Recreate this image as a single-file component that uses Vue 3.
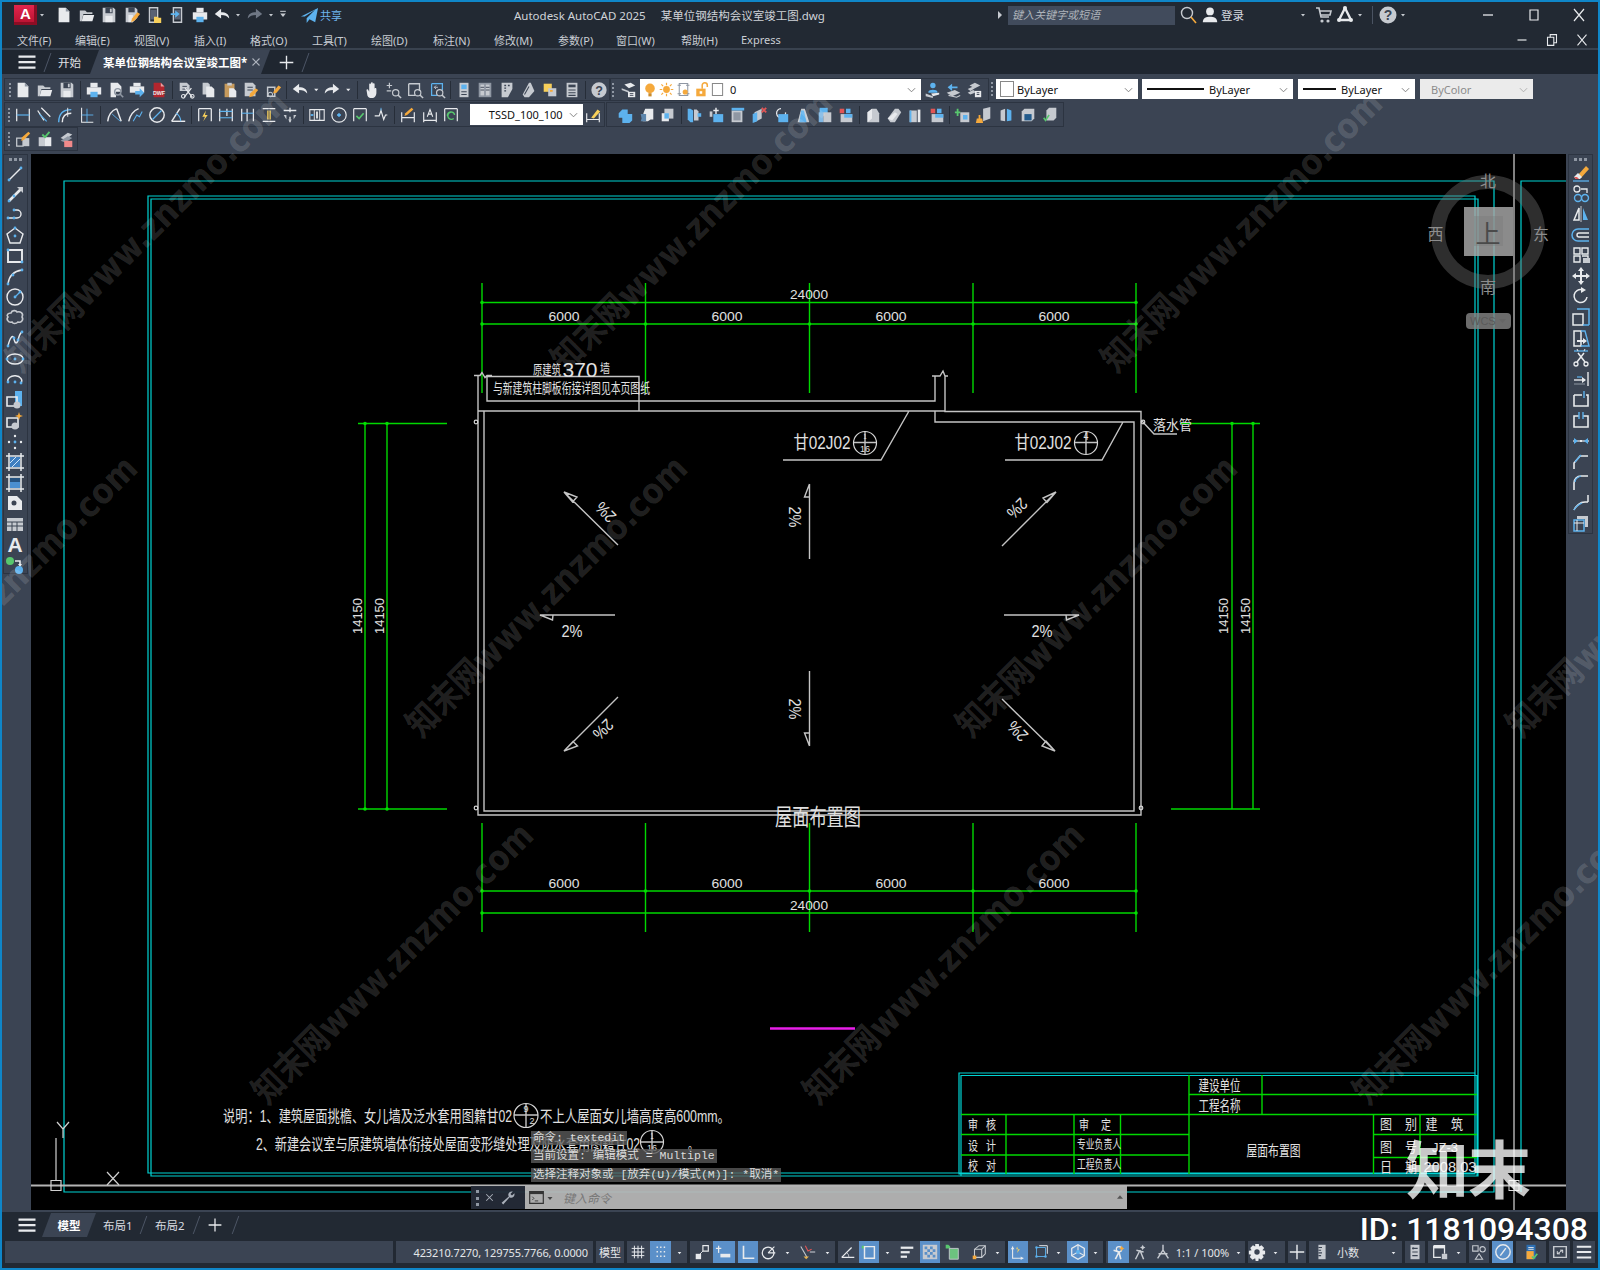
<script setup>
import { h } from 'vue'

const W = '#e8eaed', L = '#c6cad0', M = '#8f97a3', B = '#5db2ee', O = '#f5a93c', Y = '#f7cf5a', Rd = '#e25555', Gn = '#58c76e', D = '#3b4453'
const S = (d, c = W, w = 1.4) => ({ d, fill: 'none', stroke: c, 'stroke-width': w })
const F = (d, c = W) => ({ d, fill: c })
const C = (x, y, r) => `M${x - r} ${y}a${r} ${r} 0 1 0 ${2 * r} 0a${r} ${r} 0 1 0 ${-2 * r} 0z`
const dot = (...p) => { const o = []; for (let i = 0; i < p.length; i += 2) o.push(F(C(p[i], p[i + 1], 1.4), B)); return o }
const T = (t, x, y, size, c = W) => ({ t, x, y, 'font-size': size, fill: c, 'font-family': 'Liberation Sans, sans-serif', 'font-weight': 700, 'text-anchor': 'middle' })
const glass = [S(C(13, 13, 3.5), L, 1.3), S('M15.5 15.5L19 19', L, 1.6)]

const icons = {
  new: [F('M4 2h8l4 4v12H4z'), F('M12 2l4 4h-4z', M)],
  open: [F('M2 5h6l2 2h6v2H6L4 17H2z', L), F('M6 10h12l-2 7H4z')],
  save: [F('M3 2h12l2 2v14H3z', L), F('M6 2h8v6H6z', D), F('M11 3h2v4h-2z', L), F('M6 11h8v7H6z')],
  saveas: [F('M3 2h11l2 2v9l-5 5H3z', L), F('M6 2h7v5H6z', D), F('M6 10h5v8H6z'), F('M9 18l1-4 6-7 3 2-6 7z', O)],
  phone: [S('M5 2h9v16H5z', L, 1.6), F('M6 4h7v11H6z', '#596274'), F('M10 12h4l1 1h3v6h-8z', Y)],
  phoneup: [S('M6 2h9v16H6z', L, 1.6), F('M7 4h7v11H7z', '#596274'), F('M3 8h5V5l5 4-5 4v-3H3z', B)],
  print: [F('M6 2h8v5H6z'), F('M2 7h16v8H2z'), F('M6 12h8v6H6z', B)],
  undo: [F('M2 9l7-6v4c5 0 9 2 9 7-2-3-5-4-9-4v4z')],
  redo: [F('M18 9l-7-6v4c-5 0-9 2-9 7 2-3 5-4 9-4v4z', W)],
  redodim: [F('M18 9l-7-6v4c-5 0-9 2-9 7 2-3 5-4 9-4v4z', '#6f7785')],
  drop: [F('M6 8h8l-4 5z', L)],
  dropd: [F('M6 9h8l-4 5z', W)],
  menu: [F('M6 4h8v1.500H6z', L), F('M6 8h8l-4 5z', L)],
  share: [F('M1 11L19 2l-3 15-6-3-3 4v-5l9-9-11 7z', B)],
  search: [S(C(9, 8, 5.5), L, 1.4), S('M13 12l5 6', O, 1.6)],
  user: [F(C(10, 6, 4.3)), F('M2 18c0-5 4-6 8-6s8 1 8 6z')],
  cart: [S('M3 3h3l2 9h8M7 6h11l-1 4H8', L, 1.6), F(C(9, 16, 1.6), L), F(C(15, 16, 1.6), L)],
  aicon: [S('M10 3L4 15M10 3l6 12M4 15h12', W, 2.4), F(C(10, 3, 2)), F(C(4, 15, 2)), F(C(16, 15, 2))],
  help: [F(C(10, 10, 8.5), L), T('?', 10, 15, 14, D)],
  min: [S('M5 10h10', W, 1.3)],
  max: [S('M6 5h8v10H6z', W, 1.2)],
  close: [S('M5 4l10 12M15 4L5 16', W, 1.2)],
  restore: [S('M5 7h7v9H5z', W, 1.2), S('M8 7V4h7v9h-3', W, 1.2)],

  preview: [F('M4 2h8l4 4v6h-6v6H4z'), S(C(12, 12, 3.5), M, 1.6), S('M14.5 14.5L18 18', M, 1.8)],
  plot: [F('M6 2h8v4H6z'), F('M2 6h16v7H2z'), F('M8 11h5V8l5 5-5 5v-3H8z', B)],
  dwf: [F('M4 2h8l4 4v12H4z', '#b3262e'), F('M12 2l4 4h-4z', '#e8a0a0'), T('DWF', 10, 15, 6, W)],
  cut: [F('M3 2h8l3 3v6H3z', L), S('M6 6h5M6 9h5', D, 1), S('M9 8l8 10M16 8L8 18', W, 1.4), S(C(7, 17, 2), W, 1.2), S(C(17, 17, 2), W, 1.2)],
  copy: [F('M4 2h6l2 2v11H4z', L), F('M8 6h6l3 3v9H8z')],
  paste: [F('M4 3h11v15H4z', '#c69a5c'), F('M7 2h5v3H7z', L), F('M9 8h5l3 3v7H9z')],
  match: [F('M3 2h9l3 3v12H3z', L), S('M6 7h6M6 10h6', D, 1.2), F('M8 18l1-4 6-6 3 2-6 7z', O)],
  brush: [S('M4 7h8v10H4z', L, 1.6), F('M10 14l1-3 5-6 3 2-5 6z', O), S(C(7, 15, 2.5), L, 1.2)],
  pan: [F('M5 10c0-1 2-1 2 0l1 2V4c0-1.500 2-1.500 2 0v4V2.500c0-1.500 2-1.500 2 0V8V3.500c0-1.500 2-1.500 2 0V9c0-1.500 2-1.500 2 0v4c0 3-2 6-5 6s-4-1-5-3z')],
  zoomrt: [S('M6 2v6M3 5h6M3 11h5', L, 1.3), ...glass],
  zoomwin: [S('M3 3h12v8', L, 1.5), S('M3 3v13h7', L, 1.5), ...glass],
  zoomprev: [S('M4 3h12v7M4 3v13h6', B, 1.4), S('M11 7H7l2-2M7 7l2 2', L, 1), ...glass],
  props: [F('M5 2h10v16H5z', L), F('M7 4h6v5H7z', B), S('M7 12h6M7 15h6', D, 1.2)],
  design: [F('M3 2h14v16H3z', M), F('M5 4h4v12H5z', L), F('M11 4h4v12h-4z', L), S('M5 7h4M5 10h4M11 7h4M11 10h4', D, 1)],
  tool: [F('M4 2h12v7l-5 9H4z', L), S('M7 5h2M11 5h2M7 8h2M7 11h2', D, 1.4)],
  sheet: [F('M3 15L10 2h2l4 9-6 7H5z', L), S('M5 15l5-9', D, 1.2)],
  markup: [F('M3 3h9v9H3z', Y), F('M8 8h9v9H8z', L), F('M10 10h3v2h-3z', O)],
  calc: [F('M4 2h12v16H4z', L), F('M6 4h8v3H6z', D), S('M6 10h8M6 13h8M6 16h8', D, 1.2)],
  layer: [F('M6 4l7-2 5 3-7 3z'), F('M3 8l8 3v2l-8-3z', L), F('M10 12h8v6h-8z'), S('M12 14h4M12 16h4', D, 1)],
  bulb: [F(C(10, 8, 6), O), F('M8 14h4v4H8z', '#c98a2c')],
  sun: [F(C(10, 10, 4), O), S('M10 2v3M10 15v3M2 10h3M15 10h3M4 4l2 2M14 14l2 2M4 16l2-2M14 6l2-2', O, 1.4)],
  freeze: [S('M5 3h10v14H5z', M, 1.2), S('M3 5h4M13 5h4M3 15h4M13 15h4', M, 1.2), F(C(12, 13, 3), O)],
  lock: [F('M5 9h11v9H5z', O), S('M12 9V5a3 3 0 0 1 6 0v2', O, 1.8), F('M9 12h3v3H9z', '#fff')],
  lsquare: [S('M4 3h12v14H4z', '#888', 1.2)],
  lmatch: [F(C(11, 5, 3), B), F('M6 12c0-3 10-3 10 0v1H6z', B), F('M3 14l8 3v2l-8-2z', L), F('M9 14l9-1v2l-7 2z')],
  lprev: [F('M9 3L4 7l5 4V8h6V6H9z', B), F('M3 13l9-3 6 3-9 4z', L), S('M5 16l9 2 4-2', L, 1.2)],
  liso: [F('M5 5l6-3 6 3-6 3z', L), F('M3 9l6-3 2 2-5 3z', L), F('M3 13l6-3 2 1v2l-5 2z', L), F('M11 11h7v7h-7z'), S('M13 13h3M13 15h3', D, 1)],

  dlin: [S('M3 3v14M17 3v14', W), S('M3 10h14', B, 1.3)],
  dali: [S('M3 5l7 11M7 2l10 10', W), S('M5 9l8 8', B, 1.3)],
  darc: [S('M3 18C3 9 8 4 17 4', B, 1.6), S('M7 18C7 12 10 8 17 8', W, 1.6), S('M13 2v10', W, 1)],
  dord: [S('M4 2v16h13', W, 1.2), S('M10 3v15M4 10h13', B, 1)],
  drad: [S('M3 17C4 9 8 5 13 3', W, 1.6), S('M13 3l5 14', W, 1.6), S('M8 9l9 8', B, 1)],
  djog: [S('M3 17C5 9 9 5 14 3', W, 1.6), S('M8 17l4-7 3 2 3-6', B, 1.2)],
  ddia: [S(C(10, 10, 8), W, 1.6), S('M5 15L15 5', B, 1.4)],
  dang: [S('M3 17h15', W, 1.6), S('M3 17L12 3', W, 1.6), S('M8 8c3 2 5 5 5 9', B, 1.2)],
  dqk: [S('M3 3h14M3 3v14M17 3v14', W, 1.4), F('M11 5l-4 7h3l-2 5 5-7h-3z', Y)],
  dbase: [S('M3 3v14M11 3v8M17 3v14', W, 1.4), S('M3 6h14M3 13h14', B, 1.2)],
  dcont: [S('M3 3v14M9 3v14M16 3v14', W, 1.4), S('M3 8h13', B, 1.2)],
  dsp: [S('M3 3h14M3 17h14', W, 1.4), F('M8 5h4v10H8z', Y), S('M10 3v14', D, 1)],
  dbrk: [S('M3 5h14M10 2v5M10 12v6', W, 1.4), F('M3 10h3v5zM17 10h-3v5z', L), F('M8 15h4l-2 3z', L)],
  tol: [S('M2 4h16v12H2z', W, 1.2), S('M7 4v12M13 4v12', W, 1), F('M9 6h2v8H9z', W), F('M3 9h3v2H3z', B)],
  center: [S(C(10, 10, 8), W, 1.3), F('M9 8h2v4H9zM8 9h4v2H8z', B)],
  insp: [S('M3 3h14M3 3v14M17 3v14', W, 1.3), S('M6 11l3 3 5-6', Gn, 1.8)],
  jog: [S('M3 11h5l2-6 3 10 2-5h2', W, 1.3), S('M10 2v3', B, 1)],
  dedit: [S('M3 7v11M17 7v11M3 13h14', W, 1.3), F('M6 11l1-3 7-6 2 2-7 6z', O)],
  dtedit: [S('M3 7v11M17 7v11M3 16h14', W, 1.3), S('M7 12l3-8 3 8M8 9h4', W, 1.2)],
  dupd: [S('M3 3h14M3 3v14M17 3v14', W, 1.3), S('M14 9a4 4 0 1 0-1 5M6 11a4 4 0 0 1 8-1', Gn, 1.5)],
  dstyle: [S('M3 8v10M17 8v10M3 15h14', W, 1.3), F('M8 13l7-9 3 2-7 8z', Y)],
  union: [F('M3 8l4-4h6v5h5v7l-3 3H7V13H3z', B)],
  subtract: [F('M8 3h9v12h-3l-3 2H5l3-3v-3H6V8z', W), F('M3 9h6v8H3l1-3z', '#5d86ad')],
  inter: [F('M6 3h10v11H6z', L), F('M3 8h8v9H3z', W), F('M6 8h5v6H6z', B)],
  xface: [F('M3 3h3l3 2v13H6L3 15z', B), F('M10 4h3l2 2v10h-5z', L), F('M14 8h4v4h-4z', B)],
  mface: [S('M10 2v7M7 5h6', W, 1.6), F('M7 9h11v9H7z', B), F('M3 6h3v6H3z', L)],
  oface: [F('M4 5h12v13H4z', L), F('M6 7h8v9H6z', M), F('M4 2h14v3H4z', B)],
  delface: [F('M5 7l8-4v11l-8 4z', L), F('M3 9l5-2v10l-5 2z', B), S('M13 2l5 5M18 2l-5 5', Rd, 2)],
  rface: [S('M10 3a5 5 0 1 0 5 4', W, 1.4), F('M7 9h11v9H7z', B)],
  tface: [F('M4 18L8 3h4l5 15z', L), F('M8 5h3l3 13H6z', B)],
  cface: [F('M4 2h9v9H4z', B), F('M8 7h9v11H8z', L), F('M3 7h5v11H3z', '#7fb7e4')],
  clface: [F('M3 3h5v5H3z', Rd), F('M10 3h5v5h-5z', B), F('M4 9h13v9H4z', L), F('M8 9h9v4H8z', B)],
  body: [F('M5 18V7l5-4h5l3 5v10z', L), F('M5 7l5-4v11l-5 4z', W)],
  slice: [F('M3 14L11 3h4l3 4-7 11H6z', L), F('M3 14l8-7 3 2-6 7z', W)],
  cyl: [F('M4 5h8v13H4z', L), F('M4 5h2v13H4z', B), F('M13 4h3v14h-3z', W)],
  imp: [F('M3 3v3H1v2h2v3h2V8h2V6H5V3z', Gn), F('M7 7h10v11H7z', L), F('M10 10h5v5h-5z', B)],
  clean: [F('M9 3l8-2v13l-8 3z', L), F('M4 10h2v5H4z', O), F('M2 14h6l1 5H1z', O)],
  sep: [F('M4 5l5-2v14l-5-1z', L), F('M11 3l5 2v11l-5 1z', B)],
  shell: [F('M3 6l3-3h11v11l-3 3H3z', L), F('M6 9h8v7H6z', '#235b8c')],
  chk: [F('M6 5l3-3h8v11l-3 3H6z', L), S('M3 13l2 3 4-6', Gn, 1.8)],
  note1: [S('M3 9h7v9H3z', L, 1.4), F('M10 9h7v9h-7z', L), F('M8 12l1-4 7-6 2 2-7 7z', O)],
  note2: [F('M3 8h7v10H3z', L), F('M10 8h7v10h-7z', W), S('M7 5l3 3 5-6', Gn, 2)],
  note3: [F('M4 9l8-6 5 2-8 6z', L), F('M4 12l8-5 5 2-8 5z', M), F('M8 12h9v7H8z', '#f0898a')],

  line: [S('M4 16L16 4'), ...dot(4, 16, 16, 4)],
  pline: [S('M4 16L16 4', W, 2.6), F('M12 2h6v6z', L), ...dot(4, 16, 9, 11)],
  pl2: [S('M3 13h9a4 4 0 0 0 0-8H9'), ...dot(3, 13, 9, 5, 9, 13)],
  polyg: [S('M10 2l8 6-3 9H5L2 8z'), ...dot(10, 10, 10, 2)],
  rect: [S('M3 4h14v12H3z', W, 1.9), ...dot(3, 4, 17, 16)],
  arc: [S('M3 17C4 9 9 4 17 3'), ...dot(3, 17, 8, 8, 17, 3)],
  circ: [S(C(10, 10, 8)), S('M10 10l5-5', B, 1.2), ...dot(10, 10, 15, 5)],
  cloud: [S('M6 5c1-3 5-3 6-1 3-1 7 1 5 5 2 3-1 6-4 5-2 2-5 2-6 0-4 1-6-3-4-5-2-2 0-4 3-4z', L, 1.6)],
  spl: [S('M3 17C5 8 8 5 9 10s3 5 4 1 2-7 4-8'), ...dot(3, 17, 9, 9, 13, 11, 17, 3)],
  ell: [S('M2 10a8 5 0 1 0 16 0a8 5 0 1 0-16 0z'), ...dot(2, 10, 18, 10, 10, 10)],
  ella: [S('M3 12a7 5 0 1 1 13 1'), ...dot(3, 12, 10, 12, 16, 13)],
  ins: [F('M10 1h7v15h-7z', B), S('M2 7h10v9H2z', W, 1.6), F(C(12, 15, 3.5), L)],
  blk: [S('M2 7h11v9H2z', W, 1.6), F(C(10, 15, 3.5), L), F('M14 1l1 3 3 1-3 1-1 3-1-3-3-1 3-1z', O)],
  pts: [F(C(10, 4, 1.2)), F(C(4, 10, 1.2)), F(C(16, 10, 1.2)), F(C(10, 16, 1.2)), ...dot(10, 10)],
  hatch: [F('M5 5h10v10H5z', '#3f7fc0'), S('M7 15l8-8M5 11l6-6', '#cfe5fa', 1), S('M4 1v18M16 1v18M1 4h18M1 16h18', W, 1.5)],
  grad: [F('M5 5h10v10H5z', '#4a8fd0'), F('M5 5h10v4H5z', '#25527f'), S('M4 1v18M16 1v18M1 4h18M1 16h18', W, 1.5)],
  reg: [F('M3 3h9l5 5v9H3z'), F(C(9, 10, 2.5), D)],
  tbl: [F('M2 4h16v13H2z', L), S('M2 8h16M2 12h16M7 8v9M12 8v9', D, 1)],
  text: [T('A', 10, 18, 21, W)],
  addsel: [F(C(5, 6, 4), Gn), S('M10 6h5v4', W, 1.6), F('M13 9h4l-2 3z'), F(C(14, 15, 4), B)],

  erase: [F('M7 12l8-9 3 3-8 9z', O), F('M3 14l4-4 4 4-2 2H5z'), S('M2 18h16', B, 1.3), F('M3 14h3l2 2H5z', Rd)],
  copyo: [S(C(6, 5, 3), W, 1.3), S('M10 5h6v4', W, 1.3), S(C(7, 14, 3.5), B, 1.4), S(C(14, 14, 3.5), B, 1.4)],
  mirror: [S('M8 4L3 16h5z', W, 1.5), F('M12 4l5 12h-5z', B), S('M10 2v16', W, .8)],
  offset: [S('M18 4H7a6 6 0 0 0 0 12h11', B, 1.5), S('M18 8H8a2 2 0 0 0 0 4h10', W, 1.4)],
  array: [S('M3 3h6v6H3zM11 3h6v6h-6zM3 11h6v6H3zM11 11h6v4', W, 1.4), F('M12 13h7v5h-7z', L)],
  move: [F('M10 1l3 4h-2v4h4V7l4 3-4 3v-2h-4v4h2l-3 4-3-4h2v-4H5v2l-4-3 4-3v2h4V5H7z')],
  rot: [S('M16 11a6.500 6.500 0 1 1-5-7.300', W, 1.5), F('M10 1l5 3-5 3z')],
  scale: [S('M2 7h10v11H2z', W, 1.5), S('M6 2h12v16', B, 1.5), S('M12 18h6', B, 1.5)],
  str: [S('M3 3h7v15H3z', W, 1.5), S('M10 3h4l4 15h-8', B, 1.4), F('M6 12h6v-2l4 3-4 3v-2H6z')],
  trim: [S('M3 3h14', B, 1.3), S('M7 3L6 1M13 3l1-2', W, 1), S('M7 5l7 9M13 5l-7 9', W, 1.5), S(C(5, 16, 2), W, 1.3), S(C(15, 16, 2), W, 1.3)],
  ext: [S('M17 3v14', W, 1.4), S('M3 11h11', W, 1.4), F('M11 8l4 3-4 3z'), S('M6 8h5', B, 1.2), S('M3 15h11', M, 1)],
  brkp: [S('M3 6h8M15 6h2v11H3V6', W, 1.6), S('M13 2v7', B, 1.4)],
  brk: [S('M8 6H3v11h14V6h-5', W, 1.6), S('M8 2v7M12 2v7', B, 1.4)],
  join: [S('M2 10h16', W, 1.2), F('M3 7l4 3-4 3zM17 7l-4 3 4 3z', B), F('M9 9h2v2H9z')],
  cham: [S('M3 18v-6l6-7h8', W, 1.6), S('M4 11l6-7', B, 1.3)],
  fill: [S('M3 18V11c0-4 3-7 7-7h7', W, 1.6), S('M4 10c0-3 3-5 6-6', B, 1.3)],
  blend: [S('M3 18c1-3 3-4 5-6 3-3 6-2 9-2M17 3v7', W, 1.5), S('M3 18c2-4 6-6 8-7', B, 1.3)],
  expl: [F('M6 3h11v11h-3V6H6z', L), S('M3 7h10v11H3z', B, 1.5), S('M6 7v11M3 10h10', W, 1)],

  grid: [S('M6 3v14M10 3v14M14 3v14M3 6h14M3 10h14M3 14h14', W, 1.1)],
  snap: [F('M5 4h1.600v1.600H5zM9 4h1.600v1.600H9zM13 4h1.600v1.600H13zM5 9h1.600v1.600H5zM9 9h1.600v1.600H9zM13 9h1.600v1.600H13zM5 14h1.600v1.600H5zM9 14h1.600v1.600H9zM13 14h1.600v1.600H13z')],
  infer: [F('M3 12h6v6H3z'), S('M11 3h6v6h-6z', W, 1.3), S('M11 9L7 13', W, 1)],
  dyn: [S('M4 3v8', W, 1.4), S('M1 6h6', W, 1.4), F('M6 12h11v4H6z')],
  ortho: [S('M5 3v14h12', W, 1.8)],
  polar: [S(C(9, 11, 6.5), W, 1.4), S('M9 11l7-7M9 11h8', W, 1.2)],
  osnap: [S('M2 4l7 12', L, 1.2), S('M12 10h6', L, 1.2), S('M7 3l3 6 4-2', Rd, 1.2), F('M5 15h6l-3 3z', '#e5b04c')],
  angl: [S('M3 16h14M3 16L14 5', W, 1.4), S('M9 11a6 6 0 0 1 2 5', L, 1)],
  trk: [F('M2 3h3v3H2z', Gn), S('M5 4h11v13H5z', W, 1.6)],
  lwt: [F('M3 4h14v2.500H3z'), F('M3 9h10v2.500H3z'), F('M3 14h7v2.500H3z')],
  trans: [F('M2 2h16v16H2z', L), F('M4 4h3v3H4zM10 4h3v3h-3zM7 7h3v3H7zM13 7h3v3h-3zM4 10h3v3H4zM10 10h3v3h-3zM7 13h3v3H7zM13 13h3v3h-3z', '#5a8fc7')],
  selc: [F('M3 2h3l2 2v2H3z', Gn), F('M7 6h10v12H7z', '#6cc27f'), S('M7 6h10v12H7z', L, 1)],
  sub3: [S('M5 7l5-4h7v9l-4 4H5z', L, 1.2), S('M5 7h8v9M13 7l4-4', L, 1.2), F('M3 14h4v4H3z', O)],
  gizmo: [S('M4 4v13h12', W, 1.2), F('M4 4l-2 3h4z', W), F('M16 17l-3-2v4z', W), F('M9 4l1 3h2l-3 4 1-4H8z', Y)],
  sel3: [S('M5 5h10v10H5z', B, 1), S('M8 3h9v9', W, 1.1), ...dot(5, 5, 15, 15, 5, 15)],
  wbal: [S('M10 2l7 4v8l-7 4-7-4V6z', W, 1.4), S('M10 10V2M10 10l7 4M10 10l-7 4', W, 1.2), F(C(10, 10, 2.2), B)],
  anno: [S('M10 10L6 18M10 10l-6-2M10 10l2 8', W, 1.8), S(C(10, 7, 3), W, 1.4), F('M13 3l1 2 2 1-2 1-1 2-1-2-2-1 2-1z', O)],
  anno2: [S('M10 8L5 18M10 8l4 10M6 8l8 2', L, 1.6), F('M13 2l1 2 2 1-2 1-1 2-1-2-2-1 2-1z', L)],
  anno3: [S('M10 8L4 17M10 8l6 9M10 2v6M5 12h10', L, 1.6)],
  gear: [F('M8 1h4l.5 3 2.500-1.500 3 3L16 8l3 .5v4l-3 .5 1.500 2.500-3 3L12 17l-.5 3h-3L8 17l-3 1.500-3-3L3.500 13 1 12.500v-4L4 8 2.500 5.500l3-3L8 4z'), F(C(10, 10, 3), D)],
  plus: [S('M10 2v16M2 10h16', W, 1.6)],
  ruler: [F('M6 2h8v16H6z', L), S('M6 5h4M6 8h3M6 11h4M6 14h3', D, 1.2)],
  qprop: [F('M5 2h10v16H5z', L), S('M7 6h6M7 10h6M7 14h6', D, 1.2), F('M7 5h2v2H7z', D)],
  lay: [S('M3 3h12v9', W, 1.4), S('M3 3v13h8', W, 1.4), F('M3 3h12v3H3z'), F('M12 12h6v6h-6z', L)],
  iso: [S('M3 3h6v6H3z', L, 1.2), S(C(14, 7, 3), L, 1.2), S('M10 12l-4 6h8z', L, 1.2)],
  hw: [S(C(10, 10, 8), W, 1.6), S('M7 14l6-8', W, 1.6), F('M12 6l2-1-1 2z')],
  clip: [F('M5 2h10v16H5z', '#2d6fb3'), F('M5 9h8v9H5z', O), S('M7 5h6M7 7h6', W, 1), S('M11 15l2 2 4-5', Gn, 1.8)],
  full: [S('M3 4h14v12H3z', L, 1.6), S('M7 12l6-4M7 12v-3M7 12h3M13 8v3M13 8h-3', W, 1)],
  ham: [F('M1.500 3.500h17v2.200h-17zM1.500 9h17v2.200h-17zM1.500 14.500h17v2.200h-17z')],
  ham2: [F('M2 3h16v2.200H2zM2 9h16v2.200H2zM2 15h16v2.200H2z')],
  cmd: [S('M2 3h16v14H2z', '#333', 1.4), F('M2 3h16v3H2z', '#333'), S('M5 9l2 2-2 2M8 14h4', '#333', 1)],
  cmdv: [F('M5 8h10l-5 6z', '#444')],
  wrench: [F('M16 2l-3 3 2 2 3-3c1 4-3 7-6 5l-8 9-2-2 9-8c-2-3 1-7 5-6z', '#aab0ba')],
  xx: [S('M5 5l10 10M15 5L5 15', '#aab0ba', 1.6)],
  up: [F('M5 13l5-6 5 6z', '#555')],
}

const Ic = (p) => h('svg', { class: 'ic', viewBox: '0 0 20 20', width: p.s || 20, height: p.s || 20 },
  (icons[p.n] || []).map(o => o.t ? h('text', (({ t, ...r }) => r)(o), o.t) : h('path', o)))
Ic.props = ['n', 's']

const menus = [['文件(F)', 58], ['编辑(E)', 59], ['视图(V)', 60], ['插入(I)', 56], ['格式(O)', 62], ['工具(T)', 59], ['绘图(D)', 62], ['标注(N)', 61], ['修改(M)', 64], ['参数(P)', 58], ['窗口(W)', 65], ['帮助(H)', 60], ['Express', 50]]

const row1a = ['new', 'open', 'save', '|', 'print', 'preview', 'plot', 'dwf', '|', 'cut', 'copy', 'paste', 'match', 'brush', '|', 'undo', 'v', 'redo', 'v', '||', 'pan', 'zoomrt', 'zoomwin', 'zoomprev', '|', 'props', 'design', 'tool', 'sheet', 'markup', 'calc', '|', 'help']
const row2a = ['dlin', 'dali', 'darc', 'dord', '|', 'drad', 'djog', 'ddia', 'dang', '|', 'dqk', 'dbase', 'dcont', 'dsp', 'dbrk', '|', 'tol', 'center', 'insp', 'jog', '|', 'dedit', 'dtedit', 'dupd']
const row2b = ['union', 'subtract', 'inter', '|', 'xface', 'mface', 'oface', 'delface', 'rface', 'tface', 'cface', 'clface', '|', 'body', 'slice', 'cyl', 'clface', '|', 'imp', 'clean', 'sep', 'shell', 'chk']
const left = ['line', 'pline', 'pl2', 'polyg', 'rect', 'arc', 'circ', 'cloud', 'spl', 'ell', 'ella', 'ins', 'blk', 'pts', 'hatch', 'grad', 'reg', 'tbl', 'text', 'addsel']
const right = ['erase', 'copyo', 'mirror', 'offset', 'array', 'move', 'rot', 'scale', 'str', 'trim', 'ext', 'brkp', 'brk', 'join', 'cham', 'fill', 'blend', 'expl']

const status = [
  { w: 388 }, { w: 197, label: '423210.7270, 129755.7766, 0.0000', cls: 'coord' }, { w: 28, label: '模型' },
  { w: 60, items: [['grid', 22], ['s', 1], ['snap', 21, 1], ['v', 16]] },
  { w: 145, items: [['infer', 23], ['dyn', 22, 1], ['s', 3], ['ortho', 20, 1], ['polar', 22], ['v', 14], ['s', 2], ['osnap', 24], ['v', 15]] },
  { w: 167, items: [['angl', 20], ['s', 1], ['trk', 20, 1], ['v', 17], ['s', 1], ['lwt', 20], ['s', 3], ['trans', 20, 1], ['selc', 24], ['s', 4], ['sub3', 22], ['v', 15]] },
  { w: 95, items: [['gizmo', 20, 1], ['s', 2], ['sel3', 22], ['v', 13], ['s', 2], ['wbal', 21, 1], ['v', 15]] },
  { w: 139, items: [['s', 2], ['anno', 21, 1], ['anno2', 22], ['s', 1], ['anno3', 22], ['t1', 57], ['v', 14]] },
  { w: 37, items: [['gear', 18], ['v', 19]] }, { w: 18, items: [['plus', 18]] },
  { w: 93, items: [['s', 2], ['ruler', 21], ['t2', 32], ['s', 22], ['v', 14], ['s', 2]] },
  { w: 20, items: [['qprop', 20]] }, { w: 38, items: [['lay', 23], ['v', 15]] }, { w: 20, items: [['iso', 20]] },
  { w: 21, items: [['hw', 21, 1]] }, { w: 30, items: [['clip', 30]] }, { w: 21, items: [['full', 21]] }, { w: 22, items: [['ham2', 22]] },
]

const marks = [[21, 374], [566, 374], [1116, 374], [-129, 739], [421, 739], [971, 739], [1521, 739], [267, 1106], [818, 1106], [1368, 1106]]

const cyanD = 'M64 181H1494V1192H64ZM1566 181H1521V1192M148 196H1475V1173H148ZM151 199H1478V1176H151ZM959 1073H1475V1174H959ZM961 1075.500H1477V1176H961Z'
const greenD = [
  'M482 283V393M645.500 283V393M809.500 283V393M973 283V393M1136 283V393M482 302.500H1136M482 324H1136',
  'M358 423.500H447M358 809H447M365 423.500V809M387 423.500V809',
  'M1180 423.500H1260M1171 809H1260M1232 423.500V809M1253 423.500V809',
  'M482 823V932M645.500 823V932M809.500 823V932M973 823V932M1136 823V932M482 891H1136M482 913H1136',
  'M1189 1075V1174M1262 1075V1114M1189 1094.500H1477M961 1114.500H1477M961 1134.500H1189M961 1155H1189M1006 1114.500V1174M1074 1114.500V1174M1120.500 1114.500V1174M1373.500 1114.500V1174M1420 1114.500V1174M1373.500 1134.500H1477M1373.500 1157.500H1477'
].join('')
const tickPts = [[482, 302.5], [482, 324], [645.5, 324], [809.5, 324], [973, 324], [1136, 324], [1136, 302.5], [365, 423.5], [387, 423.5], [1232, 423.5], [1253, 423.5], [365, 809], [387, 809], [482, 891], [645.5, 891], [809.5, 891], [973, 891], [1136, 891], [482, 913], [1136, 913]]
const whiteD = [
  'M478 376V815H1141V411.500H945V376M484 411V811H1134V422H935V411M478 411H945M487 376V401H935V376M487 376.500H639V411',
  'M474 375.500h6l2-3 3 5 2-2h5M932 376h8l3-5 2 5h3',
  'M564 492L618 545M564 492l13 5-4.500 5zM809.500 484V559M809.500 484l-5 13h5M1056 492L1002 546M1056 492l-13 6 4 4.500z',
  'M540 615H615M540 615h13l-.5 5zM1004 615H1079M1079 615h-13l.5 5z',
  'M618 697L564 751M564 751l9-9.500 4.500 4.500zM809.500 671V746M809.500 746l-5-13h5M1002 699L1055 751M1055 751l-13-5 4-5z',
  'M783 460H881L909 411M1005 460H1102L1123 422M1142 421L1154 434H1177',
  'M854 442.500H876.500M865 431V454M1074 442.500H1097M1086 431V454M514 1115H538M526 1104V1127M641 1142H663M652 1131V1153'
].join('')
const circles = [[865, 443, 11.5], [1086, 443, 11.5], [526, 1115.5, 12], [652, 1142, 11.5], [476, 422, 1.8], [1143, 422, 1.8], [476, 808, 1.8], [1141, 808, 1.8]]

// x, y, text, size, length, rotation
const cad = [
  [809, 294, '24000', 13.5, 38], [564, 316, '6000', 13.5, 31], [727, 316, '6000', 13.5, 31], [891, 316, '6000', 13.5, 31], [1054, 316, '6000', 13.5, 31],
  [809, 905, '24000', 13.5, 38], [564, 883, '6000', 13.5, 31], [727, 883, '6000', 13.5, 31], [891, 883, '6000', 13.5, 31], [1054, 883, '6000', 13.5, 31],
  [357, 616, '14150', 13, 36, -90], [379, 616, '14150', 13, 36, -90], [1223, 616, '14150', 13, 36, -90], [1245, 616, '14150', 13, 36, -90],
  [547, 369, '原建筑', 13, 28], [580, 369, '370', 21, 35], [605, 369, '墙', 12, 10],
  [571.5, 388, '与新建筑柱脚板衔接详图见本页图纸', 14, 157],
  [822, 443, '甘02J02', 18, 57], [1043, 443, '甘02J02', 18, 57], [1172.5, 425, '落水管', 14, 39],
  [865, 436, '1', 8, 3], [865, 449, '16', 9, 10], [1086, 436, '4', 10, 5],
  [526, 1109, '9', 9, 5], [532, 1121, '2', 9, 5], [652, 1136, '1', 9, 3], [652, 1148, '16', 9, 10],
  [606, 512, '2%', 17, 21, 225], [794, 517, '2%', 17, 21, 90], [1017, 508, '2%', 17, 21, 135], [572, 631, '2%', 17, 21], [1042, 631, '2%', 17, 21],
  [603, 729, '2%', 17, 21, 135], [794, 709, '2%', 17, 21, 90], [1018, 731, '2%', 17, 21, 225],
  [818, 817, '屋面布置图', 23, 86],
  [367.5, 1116, '说明：1、建筑屋面挑檐、女儿墙及泛水套用图籍甘02', 16, 289], [635, 1116, '不上人屋面女儿墙高度高600mm。', 16, 190],
  [448, 1144, '2、新建会议室与原建筑墙体衔接处屋面变形缝处理及防水套用图籍甘02', 16, 384], [693, 1144, '。', 14, 10],
  [1219.5, 1085, '建设单位', 15, 42], [1219.5, 1105.5, '工程名称', 15, 42],
  [973, 1124, '审', 13, 10], [991, 1124, '核', 13, 10], [973, 1145, '设', 13, 10], [991, 1145, '计', 13, 10], [973, 1165.5, '校', 13, 10], [991, 1165.5, '对', 13, 10],
  [1084, 1124, '审', 13, 10], [1106, 1124, '定', 13, 10], [1099, 1145, '专业负责人', 12, 44], [1099, 1165, '工程负责人', 12, 44],
  [1273.5, 1150, '屋面布置图', 15, 54],
  [1386, 1124, '图', 14, 12], [1411, 1124, '别', 14, 12], [1431.5, 1124, '建', 14, 12], [1457, 1124, '筑', 14, 12],
  [1386, 1147, '图', 14, 12], [1411, 1147, '号', 14, 12], [1445, 1147, 'JZ-3', 13, 26],
  [1386, 1167, '日', 14, 12], [1411, 1167, '期', 14, 12], [1450, 1167, '2008.03', 14, 53],
]
</script>

<template>
  <div class="win">
    <div class="titlebar">
      <div class="tb-left">
        <div class="logo">A</div>
        <Ic n="drop" s="10" />
        <div class="qa">
          <Ic v-for="n in ['new','open','save','saveas','phone','phoneup','print']" :key="n" :n="n" s="18" class="q" />
          <Ic n="undo" s="18" class="q" /><Ic n="drop" s="10" />
          <Ic n="redodim" s="18" class="q" /><Ic n="drop" s="10" /><Ic n="menu" s="14" />
          <Ic n="share" s="19" class="share" /><span class="sharet">共享</span>
        </div>
      </div>
      <div class="tb-title"><span>Autodesk AutoCAD 2025</span><span class="fname">某单位钢结构会议室竣工图.dwg</span></div>
      <div class="tb-right">
        <span class="tri"></span>
        <div class="searchbox">键入关键字或短语</div>
        <Ic n="search" class="r1" /><Ic n="user" s="18" class="r2" /><span class="login">登录</span>
        <Ic n="drop" s="10" class="r3" /><Ic n="cart" class="r4" /><Ic n="aicon" class="r5" /><Ic n="drop" s="10" />
        <span class="vsep"></span><Ic n="help" class="r6" /><Ic n="drop" s="10" />
        <Ic n="min" class="r7" /><Ic n="max" class="r8" /><Ic n="close" class="r9" />
      </div>
    </div>

    <div class="menubar">
      <span v-for="m in menus" :key="m[0]" class="mi" :style="{ width: m[1] + 'px' }">{{ m[0] }}</span>
      <div class="childctl"><Ic n="min" s="18" /><Ic n="restore" s="18" /><Ic n="close" s="18" /></div>
    </div>

    <div class="tabbar">
      <Ic n="ham" s="20" class="hamb" />
      <span class="slash sl1"></span>
      <span class="tab1">开始</span>
      <div class="tabactive"><span>某单位钢结构会议室竣工图*</span><Ic n="xx" s="14" /></div>
      <Ic n="plus" s="17" class="tplus" />
      <span class="slash sl2"></span>
    </div>

    <div class="tools">
      <div class="trow r-1">
        <div class="panel p1a">
          <span class="grip"></span>
          <template v-for="(n, i) in row1a" :key="i">
            <span v-if="n === '|'" class="ts"></span>
            <span v-else-if="n === '||'" class="ts2"></span>
            <Ic v-else-if="n === 'v'" n="dropd" s="10.5" />
            <span v-else class="cell"><Ic :n="n" s="18" /></span>
          </template>
        </div>
        <div class="panel p1b">
          <span class="grip"></span>
          <span class="cell c1"><Ic n="layer" s="18" /></span>
          <div class="combo c-layer">
            <Ic n="bulb" s="16" /><Ic n="sun" s="17" /><Ic n="freeze" s="17" /><Ic n="lock" s="17" /><Ic n="lsquare" s="17" />
            <span class="zero">0</span>
            <svg class="chev" viewBox="0 0 10 6" width="9" height="6"><path d="M1 1l4 4 4-4" fill="none" stroke="#777" stroke-width="1" /></svg>
          </div>
          <span class="cell c2"><Ic n="lmatch" s="18" /></span><span class="cell c2"><Ic n="lprev" s="18" /></span><span class="cell c2"><Ic n="liso" s="18" /></span>
        </div>
        <span class="grip g2"></span>
        <div class="combo c-a"><span class="swatch"></span><span>ByLayer</span><svg class="chev" viewBox="0 0 10 6" width="9" height="6"><path d="M1 1l4 4 4-4" fill="none" stroke="#777" /></svg></div>
        <div class="combo c-b"><span class="lw l1"></span><span>ByLayer</span><svg class="chev" viewBox="0 0 10 6" width="9" height="6"><path d="M1 1l4 4 4-4" fill="none" stroke="#777" /></svg></div>
        <div class="combo c-c"><span class="lw l2"></span><span>ByLayer</span><svg class="chev" viewBox="0 0 10 6" width="9" height="6"><path d="M1 1l4 4 4-4" fill="none" stroke="#777" /></svg></div>
        <div class="combo c-d"><span>ByColor</span><svg class="chev" viewBox="0 0 10 6" width="9" height="6"><path d="M1 1l4 4 4-4" fill="none" stroke="#aaa" /></svg></div>
      </div>
      <div class="trow r-2">
        <div class="panel p2a">
          <span class="grip"></span>
          <template v-for="(n, i) in row2a" :key="i">
            <span v-if="n === '|'" class="ts"></span>
            <span v-else class="cell n2"><Ic :n="n" s="18" /></span>
          </template>
          <div class="combo c-t"><span>TSSD_100_100</span><svg class="chev" viewBox="0 0 10 6" width="9" height="6"><path d="M1 1l4 4 4-4" fill="none" stroke="#777" /></svg></div>
          <span class="cell n3"><Ic n="dstyle" s="18" /></span>
        </div>
        <div class="panel p2b">
          <template v-for="(n, i) in row2b" :key="i">
            <span v-if="n === '|'" class="ts3"></span>
            <span v-else class="cell n4"><Ic :n="n" s="18" /></span>
          </template>
        </div>
      </div>
      <div class="trow r-3">
        <div class="panel p3">
          <span class="grip"></span>
          <span v-for="n in ['note1','note2','note3']" :key="n" class="cell"><Ic :n="n" s="18" /></span>
        </div>
      </div>
    </div>

    <div class="main">
      <div class="side sl">
        <div class="sidepanel pl">
          <span class="hgrip"></span>
          <Ic v-for="n in left" :key="n" :n="n" s="20" />
        </div>
      </div>
      <div class="canvas">
        <svg class="draw" viewBox="31 154 1535 1056" width="1535" height="1056">
          <path :d="cyanD" fill="none" stroke="#00d4d4" stroke-width="1.200" />
          <path :d="greenD" fill="none" stroke="#00d800" stroke-width="1.400" />
          <circle v-for="(p, i) in tickPts" :key="i" :cx="p[0]" :cy="p[1]" r="1.800" fill="#00e000" />
          <path :d="whiteD" fill="none" stroke="#c4c4c4" stroke-width="1.400" />
          <circle v-for="(c, i) in circles" :key="'c' + i" :cx="c[0]" :cy="c[1]" :r="c[2]" fill="none" stroke="#d6d6d6" stroke-width="1.200" />
          <path d="M770 1028.500H855" stroke="#e81fe8" stroke-width="2.600" />
          <text v-for="(t, i) in cad" :key="'t' + i" class="cad" :x="t[0]" :y="t[1]" :font-size="t[3]" :textLength="t[4]" lengthAdjust="spacingAndGlyphs" text-anchor="middle" dominant-baseline="central" :transform="t[5] ? `rotate(${t[5]} ${t[0]} ${t[1]})` : null">{{ t[2] }}</text>

          <path d="M31 1185.500H1566" stroke="#b4b4b4" stroke-width="2" />
          <path d="M1514 154V1210" stroke="#d8d8d8" stroke-width="1.200" />
          <rect x="1509" y="1180.500" width="10" height="10" fill="none" stroke="#e0e0e0" />
          <path d="M56 1138V1180M51 1180.500h10v10h-10zM57 1122l6 7 6-7M63 1129v9M107 1172l12 13M119 1172l-12 13" fill="none" stroke="#d0d0d0" stroke-width="1.200" />

          <circle cx="1488" cy="232" r="50" fill="none" stroke="rgba(120,120,120,.38)" stroke-width="14" />
          <rect x="1464" y="207" width="49" height="49" fill="rgba(170,170,170,.82)" />
          <rect x="1474" y="216" width="29" height="30" fill="rgba(120,120,120,.35)" />
          <text class="cube dark" x="1488" y="232" font-size="25" text-anchor="middle" dominant-baseline="central">上</text>
          <text class="cube" x="1488" y="180" font-size="16" text-anchor="middle" dominant-baseline="central">北</text>
          <text class="cube" x="1488" y="286" font-size="16" text-anchor="middle" dominant-baseline="central">南</text>
          <text class="cube" x="1435.500" y="232.500" font-size="16" text-anchor="middle" dominant-baseline="central">西</text>
          <text class="cube" x="1541" y="232.500" font-size="16" text-anchor="middle" dominant-baseline="central">东</text>
          <rect x="1466" y="313" width="45" height="16" rx="4" fill="rgba(135,135,135,.8)" />
          <text class="wcs" x="1470" y="321" font-size="11" dominant-baseline="central">WCS</text>
          <path d="M1499 319h7l-3.500 4z" fill="#666" />
        </svg>

        <div class="hist">
          <span class="hl">命令: textedit</span>
          <span class="hl">当前设置: 编辑模式 = Multiple</span>
          <span class="hl">选择注释对象或 [放弃(U)/模式(M)]: *取消*</span>
        </div>
        <div class="cmdbar">
          <div class="cmdleft"><span class="vgrip"></span><Ic n="xx" s="13" /><Ic n="wrench" s="16" /></div>
          <div class="cmdinput">
            <Ic n="cmd" s="17" /><Ic n="cmdv" s="10" />
            <span class="ph">键入命令</span>
            <Ic n="up" s="12" class="upbtn" />
          </div>
        </div>
      </div>
      <div class="side sr">
        <div class="sidepanel pr">
          <span class="hgrip"></span>
          <Ic v-for="n in right" :key="n" :n="n" s="20" />
        </div>
      </div>
    </div>

    <div class="ltabs">
      <Ic n="ham" s="20" class="hamb" />
      <div class="ltab-a">模型</div>
      <span class="lt l-1">布局1</span><span class="slash sl3"></span>
      <span class="lt l-2">布局2</span><span class="slash sl3"></span>
      <Ic n="plus" s="16" class="lplus" /><span class="slash sl4"></span>
    </div>

    <div class="status">
      <div v-for="(b, i) in status" :key="i" class="sb" :class="b.cls" :style="{ width: b.w + 'px' }">
        <span v-if="b.label">{{ b.label }}</span>
        <template v-for="(it, j) in b.items || []" :key="j">
          <span v-if="it[0] === 's'" class="si" :style="{ width: it[1] + 'px' }"></span>
          <span v-else-if="it[0] === 'v'" class="si" :style="{ width: it[1] + 'px' }"><Ic n="dropd" s="9" /></span>
          <span v-else-if="it[0] === 't1'" class="si st" :style="{ width: it[1] + 'px' }">1:1 / 100%</span>
          <span v-else-if="it[0] === 't2'" class="si st" :style="{ width: it[1] + 'px' }">小数</span>
          <span v-else class="si" :class="{ act: it[2] }" :style="{ width: it[1] + 'px' }"><Ic :n="it[0]" s="18" /></span>
        </template>
      </div>
    </div>

    <svg class="wm" viewBox="0 0 1600 1270" width="1600" height="1270">
      <text v-for="(m, i) in marks" :key="i" class="wmt" :x="m[0]" :y="m[1]" font-size="35" textLength="380" lengthAdjust="spacingAndGlyphs" :transform="`rotate(-45 ${m[0]} ${m[1]})`">知末网www.znzmo.com</text>
    </svg>
    <div class="zm">知末</div>
    <div class="idt">ID: 1181094308</div>
  </div>
</template>

<style scoped>
.win { position: relative; width: 1600px; height: 1270px; box-sizing: border-box; border: 2px solid #0f86c8; background: #222933; color: #d8dbe0; font-family: "Noto Sans", "Noto Sans CJK SC", sans-serif; font-size: 11px; overflow: hidden; display: flex; flex-direction: column; }
.ic { flex: none; display: block; }

.titlebar { height: 26px; display: flex; align-items: center; flex: none; }
.tb-left { width: 512px; display: flex; align-items: center; padding-left: 12px; box-sizing: border-box; flex: none; }
.logo { width: 23px; height: 20px; background: linear-gradient(#e3254d, #b5112f); box-shadow: inset -3px -3px 0 #8c0d24; color: #fff; font: 700 15px "Liberation Sans", sans-serif; text-align: center; line-height: 18px; }
.qa { display: flex; align-items: center; margin-left: 5.700px; }
.qa .q { margin: 0 2.300px; }
.share { margin-left: 10px; }
.sharet { color: #6fb6ee; font-size: 11px; margin-left: 1px; }
.tb-title { width: 482px; flex: none; font-size: 11.500px; color: #d0d3d8; white-space: nowrap; }
.fname { margin-left: 15px; }
.tb-right { display: flex; align-items: center; flex: 1; }
.tri { width: 0; height: 0; border-left: 4px solid #c6cad0; border-top: 4px solid transparent; border-bottom: 4px solid transparent; margin: 0 2px; }
.searchbox { width: 167px; height: 19px; margin-left: 4px; background: #414b5c; font-style: italic; font-size: 11px; color: #aeb3ba; line-height: 18px; padding-left: 4px; box-sizing: border-box; }
.r1 { margin-left: 3px; } .r2 { margin-left: 3px; }
.login { margin-left: 2px; font-size: 11.500px; width: 24px; white-space: nowrap; }
.r3 { margin-left: 53px; } .r4 { margin-left: 5px; } .r5 { margin-left: 2px; }
.vsep { width: 1px; height: 18px; background: #4a5362; margin: 0 5px 0 7px; }
.r6 { margin-left: 0; } .r7 { margin-left: 70px; } .r8 { margin-left: 26px; } .r9 { margin-left: 25px; }

.menubar { height: 20px; flex: none; display: flex; align-items: center; padding: 3px 0 0 15px; border-bottom: 2px solid #39424f; box-sizing: border-box; height: 22px; position: relative; }
.mi { flex: none; white-space: nowrap; color: #c9cdd3; font-size: 11px; }
.childctl { position: absolute; right: 7px; top: 3px; display: flex; gap: 12px; }

.tabbar { height: 24px; flex: none; background: #1f2630; display: flex; align-items: center; padding-left: 15px; }
.slash { width: 1px; height: 19px; background: #4d5666; transform: skewX(-20deg); flex: none; }
.sl1 { margin-left: 10px; }
.tab1 { margin-left: 10px; font-size: 11.500px; width: 32px; color: #e0e2e6; }
.tabactive { width: 180px; height: 24px; background: #3b4453; clip-path: polygon(9px 0, 100% 0, calc(100% - 9px) 100%, 0 100%); display: flex; align-items: center; padding-left: 13px; gap: 5px; box-sizing: border-box; color: #fff; font-weight: 700; font-size: 11.500px; white-space: nowrap; flex: none; }
.tabactive span { width: 141px; }
.tplus { margin-left: 8px; }
.sl2 { margin-left: 10px; }

.tools { height: 80px; flex: none; background: #3b4453; padding: 5px 0 0 3px; box-sizing: border-box; display: flex; flex-direction: column; }
.trow { display: flex; align-items: stretch; }
.r-1 { height: 21px; } .r-2 { height: 23px; margin-top: 3px; } .r-3 { height: 22px; margin-top: 2px; }
.panel { display: flex; align-items: center; box-shadow: 0 0 0 1px #2c3441; background: #3b4453; position: relative; }
.grip { width: 2px; height: 14px; border-left: 2px dotted #8f97a3; margin-left: 1px; flex: none; }
.cell { width: 21.700px; display: flex; justify-content: center; flex: none; }
.ts { width: 1px; height: 18px; background: #262d38; margin: 0 2.250px; flex: none; }
.ts2 { width: 1px; height: 18px; background: #262d38; margin: 0 3px; flex: none; }
.ts3 { width: 1px; height: 18px; background: #262d38; margin: 0 1.300px; flex: none; }
.p1a { width: 604px; padding-left: 2.500px; box-sizing: border-box; }
.p1b { width: 377px; margin-left: 2px; box-sizing: border-box; }
.c1 { width: 24px; }
.c2 { width: 21.300px; }
.g2 { margin: 3px 1px 0 3px; }
.combo { background: #fff; height: 20px; display: flex; align-items: center; color: #111; font-size: 11px; position: relative; box-sizing: border-box; flex: none; white-space: nowrap; }
.chev { position: absolute; right: 5px; top: 8px; }
.c-layer { width: 281px; padding-left: 2px; height: 21px; }
.zero { margin-left: 4px; }
.c-a { width: 142px; } .c-b { width: 151px; margin-left: 4px; } .c-c { width: 117px; margin-left: 5px; } .c-d { width: 113px; margin-left: 5px; background: #ebebeb; color: #8b8b8b; padding-left: 11px; }
.swatch { width: 12px; height: 14px; border: 1px solid #888; margin: 0 3px 0 4px; }
.lw { height: 1.500px; background: #111; margin: 0 5px; flex: none; }
.l1 { width: 57px; } .l2 { width: 33px; }
.p2a { width: 599px; padding-left: 2px; box-sizing: border-box; }
.n2 { width: 21.400px; }
.c-t { width: 113px; height: 21px; margin-left: 8px; padding-left: 19px; }
.n3 { width: 20px; }
.p2b { width: 456px; margin-left: 3px; padding-left: 7px; box-sizing: border-box; }
.n4 { width: 21.800px; }
.p3 { width: 72px; padding-left: 2px; box-sizing: border-box; }

.main { height: 1056px; flex: none; display: flex; }
.side { background: #3b4453; flex: none; }
.sl { width: 29px; padding: 1px 0 0 1.500px; box-sizing: border-box; }
.sr { width: 32px; padding: 1px 0 0 3px; box-sizing: border-box; }
.sidepanel { width: 23px; box-shadow: 0 0 0 1px #2c3441; display: flex; flex-direction: column; align-items: center; gap: .580px; box-sizing: border-box; padding-top: 9px; position: relative; }
.pl { height: 418px; } .pr { height: 378px; padding-top: 8px; }
.hgrip { position: absolute; top: 3px; left: 5px; width: 13px; height: 3px; border-top: 3px dotted #8f97a3; box-sizing: border-box; }
.canvas { position: relative; width: 1535px; height: 1056px; background: #000; flex: none; overflow: hidden; }
.draw { display: block; }
.cad { fill: #e0e0e0; font-family: "Liberation Sans", "Noto Sans CJK SC", sans-serif; }
.cube { fill: #8d8d8d; font-family: "Noto Sans CJK SC", sans-serif; }
.dark { fill: #4a4a4a; }
.wcs { fill: #5a5a5a; font-family: "Liberation Sans", sans-serif; }

.hist { position: absolute; left: 500px; top: 977px; display: flex; flex-direction: column; align-items: flex-start; gap: 4.300px; font-family: "Liberation Mono", "Noto Sans CJK SC", monospace; font-size: 11.500px; color: #dcdcdc; }
.hl { background: rgba(92, 92, 92, .78); height: 14px; line-height: 14px; padding: 0 2px; white-space: pre; }
.cmdbar { position: absolute; left: 440px; top: 1032px; width: 656px; height: 23px; display: flex; }
.cmdleft { width: 54px; background: rgba(36, 43, 55, .96); display: flex; align-items: center; padding-left: 5px; box-sizing: border-box; gap: 4px; }
.vgrip { width: 3px; height: 16px; border-left: 3px dotted #8f97a3; box-sizing: border-box; }
.cmdinput { flex: 1; background: rgba(184, 184, 184, .94); display: flex; align-items: center; padding-left: 3px; position: relative; }
.ph { margin-left: 8px; font-style: italic; color: #777; font-size: 12px; }
.upbtn { position: absolute; right: 1px; top: 5px; }

.ltabs { flex: none; background: #222933; display: flex; align-items: center; padding-left: 15px; box-shadow: 0 -2px 0 #3b4453; box-sizing: border-box; height: 26px; margin-top: 2px; }
.ltab-a { width: 54px; height: 24px; margin-left: 5px; background: #3b4453; clip-path: polygon(9px 0, 100% 0, calc(100% - 9px) 100%, 0 100%); color: #fff; font-weight: 700; display: flex; align-items: center; justify-content: center; font-size: 11.500px; flex: none; }
.lt { font-size: 11.500px; color: #d8dbe0; flex: none; white-space: nowrap; }
.l-1 { margin-left: 7px; width: 28px; } .l-2 { margin-left: 11px; width: 29px; }
.sl3 { margin-left: 12px; height: 18px; }
.lplus { margin-left: 10px; } .sl4 { margin-left: 12px; height: 18px; }

.status { height: 28px; flex: none; display: flex; align-items: center; padding-left: 3px; gap: 3px; background: #222933; }
.sb { height: 22px; background: #3b4453; display: flex; align-items: center; justify-content: center; flex: none; font-size: 11px; color: #e4e6e9; overflow: hidden; white-space: nowrap; }
.coord { justify-content: flex-end; padding-right: 5px; box-sizing: border-box; letter-spacing: -.1px; }
.si { height: 22px; display: flex; align-items: center; justify-content: center; flex: none; }
.si.act { background: #5b90c9; }
.st { font-size: 11px; }

.wm { position: absolute; left: -2px; top: -2px; pointer-events: none; }
.wmt { fill: rgba(255, 255, 255, .15); font-family: "DejaVu Sans", "Noto Sans CJK SC", sans-serif; font-weight: 700; }
.zm { position: absolute; left: 1404px; top: 1123px; font: 700 63px/1.3 "Noto Sans CJK SC", sans-serif; color: rgba(255, 255, 255, .78); letter-spacing: -1px; pointer-events: none; white-space: nowrap; }
.idt { position: absolute; right: 10px; top: 1208px; font: 500 32px/1.2 Roboto, sans-serif; color: #fff; pointer-events: none; white-space: nowrap; text-shadow: 0 0 2px rgba(0,0,0,.6); }
</style>

<style>
html, body { margin: 0; background: #222933; }
</style>
